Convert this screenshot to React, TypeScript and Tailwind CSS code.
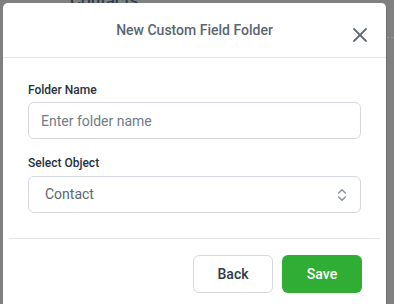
import { X, ChevronsUpDown } from 'lucide-react';

const App = () => {
  return (
    <div className="relative w-[394px] h-[304px] overflow-hidden bg-[#808080] pl-[3px] pt-[3px] font-['Roboto',sans-serif]">
      {/* page content peeking out behind the modal */}
      <div className="absolute left-[70px] top-0 h-[3px] overflow-hidden">
        <div className="-mt-[10px] text-[17px] leading-[20px] font-medium text-[#2c3e50]">Contacts</div>
      </div>
      <div className="absolute right-0 top-[37px] w-[8px] border-t border-dashed border-[#8c97a6]" />

      <div className="relative z-10 w-[384px] h-[320px] bg-white rounded-t-[5px] border-r border-[#6f6f6f] flex flex-col">
        <div className="h-[55px] border-b border-[#e3e6ea] flex items-center justify-center relative">
          <h2 className="text-[14px] font-medium text-[#5a6670] mt-[1px]">
            New Custom Field Folder
          </h2>
          <X
            className="absolute left-[345px] top-[20px] text-[#5f6b76]"
            size={24}
            strokeWidth={1.8}
          />
        </div>

        <div className="px-[25px] pt-[24px] pb-[25px] flex flex-col">
          <label className="text-[12px] leading-4 font-medium text-[#27313d]">
            Folder Name
          </label>
          <input
            className="mt-[4px] h-[37px] w-full rounded-[6px] border border-[#d5d9df] px-[12px] text-[14px] text-[#374151] placeholder:text-[#727c87] outline-none"
            placeholder="Enter folder name"
          />

          <label className="mt-[16px] text-[12px] leading-4 font-medium text-[#27313d]">
            Select Object
          </label>
          <div className="mt-[5px] h-[37px] w-full rounded-[6px] border border-[#d5d9df] pl-[16px] pr-[10px] flex items-center justify-between">
            <span className="text-[14px] text-[#5a6670]">Contact</span>
            <ChevronsUpDown size={16} strokeWidth={2.2} className="text-[#8a939d]" />
          </div>
        </div>

        <div className="mx-[6px] border-t border-[#e3e6ea] pt-[16px] pr-[18px] flex justify-end gap-[9px]">
          <button className="w-[80px] h-[38px] rounded-[6px] border border-[#d5d9df] bg-white text-[14px] font-medium text-[#2f3a48]">
            Back
          </button>
          <button className="w-[80px] h-[38px] rounded-[6px] bg-[#2fad34] text-[14px] font-medium text-white">
            Save
          </button>
        </div>
      </div>
    </div>
  );
};

export default App;
